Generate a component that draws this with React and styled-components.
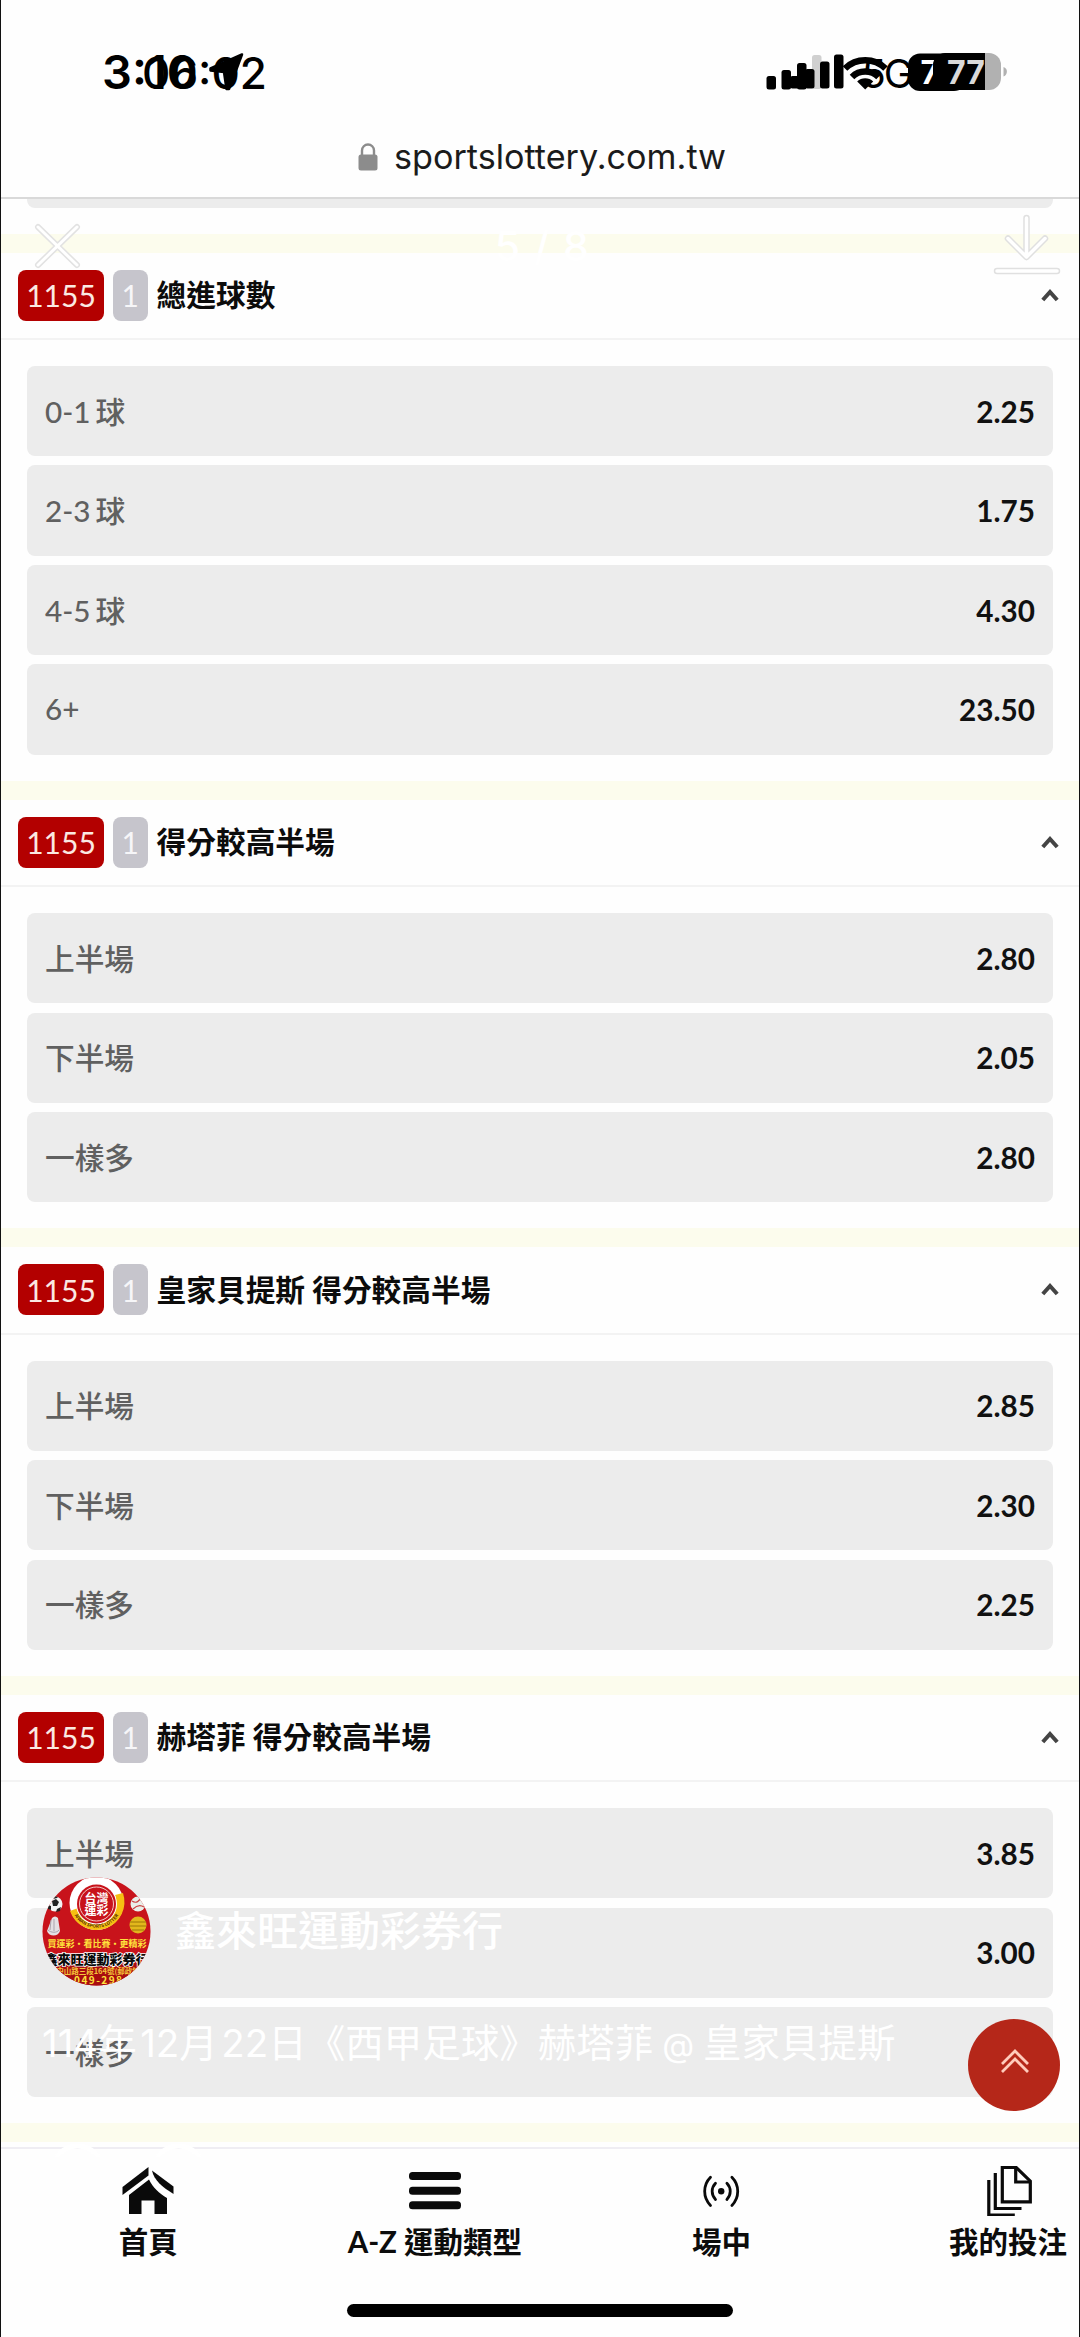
import React from "react";
import styled, { createGlobalStyle } from "styled-components";

const GlobalStyle = createGlobalStyle`
  * {
    box-sizing: border-box;
  }

  body {
    margin: 0;
    background: #fefefe;
    font-family: Lato, "Noto Sans CJK TC", sans-serif;
  }
`;

const Screen = styled.div`
  position: relative;
  display: flex;
  flex-direction: column;
  width: 1080px;
  height: 2337px;
  overflow: hidden;
  background: #fefefe;
  border-left: 1px solid #111;
  border-right: 1px solid #111;
`;

const StatusBar = styled.header`
  position: relative;
  flex: none;
  height: 128px;
`;

const StatusLayer = styled.div`
  position: absolute;
  inset: 0;
  display: flex;
  align-items: flex-start;
  justify-content: space-between;
  padding: ${(p) => p.$padding};
`;

const Clock = styled.span`
  font-family: Inter, sans-serif;
  font-size: ${(p) => p.$size}px;
  font-weight: ${(p) => p.$weight};
  line-height: 56px;
  color: #000;
`;

const ClockGroup = styled.div`
  display: flex;
  align-items: center;
  gap: 10px;
`;

const NetworkIcons = styled.svg`
  margin-top: 6px;
`;

const AddressBar = styled.div`
  flex: none;
  display: flex;
  align-items: center;
  justify-content: center;
  gap: 16px;
  height: 71px;
  padding: 0 0 12px 4px;
  border-bottom: 2px solid #d9d9d9;
  font-family: Inter, sans-serif;
  font-size: 34.2px;
  color: #1b1b1b;
`;

const Content = styled.main`
  flex: none;
  height: 1948px;
  overflow: hidden;
`;

const CutRow = styled.div`
  height: 9px;
  margin: 0 26px 25.5px;
  background: #ececec;
  border-radius: 0 0 8px 8px;
`;

const Divider = styled.div`
  height: 19.3px;
  background: #fcfced;
`;

const MarketHead = styled.div`
  display: flex;
  align-items: center;
  height: 87.5px;
  padding: 0 20px 1px 17px;
  border-bottom: 2px solid #f3f3f3;
`;

const Tag = styled.span`
  display: flex;
  align-items: center;
  justify-content: center;
  width: ${(p) => (p.$muted ? 35 : 86)}px;
  height: 51px;
  margin-right: ${(p) => (p.$muted ? 9 : 8.6)}px;
  border-radius: 8px;
  background: ${(p) => (p.$muted ? "#c6c5cc" : "#b30000")};
  color: ${(p) => (p.$muted ? "#f6f6f8" : "#fbe9e2")};
  font-size: 30px;
`;

const MarketTitle = styled.h2`
  flex: 1;
  margin: 0;
  font-size: 29.7px;
  font-weight: 700;
  line-height: 40px;
  color: #0c0c0c;
`;

const MarketBody = styled.div`
  display: flex;
  flex-direction: column;
  gap: 9.2px;
  padding: 25.7px 26px 25.8px;
`;

const Option = styled.div`
  display: flex;
  align-items: center;
  justify-content: space-between;
  height: 90.3px;
  padding: 0 18px;
  background: #ececec;
  border-radius: 8px;
`;

const OptionName = styled.span`
  padding-bottom: 2px;
  font-size: 29.7px;
  font-weight: 500;
  word-spacing: -2.5px;
  color: #606060;
`;

const Odds = styled.span`
  font-size: 29.7px;
  font-weight: 700;
  color: #111;
`;

const BottomNav = styled.nav`
  position: relative;
  flex: none;
  display: flex;
  height: 190px;
  padding-left: 4px;
  border-top: 2px solid #efedf3;
  background: #fefefe;
`;

const NavItem = styled.a`
  flex: none;
  display: flex;
  flex-direction: column;
  align-items: center;
  width: 286.6px;
  padding-top: 15px;
  font-size: 29.5px;
  font-weight: 700;
  line-height: 40px;
  color: #0c0c0c;

  svg {
    margin-bottom: 6px;
  }
`;

const HomeIndicator = styled.div`
  position: absolute;
  left: 346px;
  bottom: 20px;
  width: 386px;
  height: 13px;
  border-radius: 7px;
  background: #000;
`;

const TopButton = styled.button`
  position: absolute;
  left: 967px;
  top: 2019px;
  display: flex;
  align-items: center;
  justify-content: center;
  width: 92px;
  height: 92px;
  padding: 0 0 8px 2px;
  border: 0;
  border-radius: 50%;
  background: #b52719;
`;

/* story viewer chrome lying over the page */
const ViewerTop = styled.div`
  position: absolute;
  left: 27px;
  right: 14px;
  top: 210px;
  display: flex;
  align-items: flex-start;
  justify-content: space-between;
  pointer-events: none;
`;

const Counter = styled.span`
  padding: 10px 0 0 8px;
  font-family: Inter, sans-serif;
  font-size: 41px;
  font-weight: 500;
  line-height: 52px;
  letter-spacing: 1.5px;
  color: #fff;
`;

const ViewerInfo = styled.div`
  position: absolute;
  left: 41px;
  top: 1877px;
  display: flex;
  flex-direction: column;
  color: #fff;
`;

const Author = styled.div`
  display: flex;
  align-items: center;
  gap: 24px;
  height: 109px;
  font-size: 41px;
  font-weight: 500;

  span {
    line-height: 50px;
    padding-bottom: 2px;
  }
`;

const Caption = styled.p`
  margin: 29px 0 0;
  font-family: Inter, "Noto Sans CJK TC", sans-serif;
  font-size: 38.5px;
  line-height: 56px;
  word-spacing: -2px;
  white-space: pre;
`;

const Figure = styled.span`
  margin-left: 3.5px;
`;

const At = styled.span`
  font-size: 33px;
`;

const ViewerActions = styled.div`
  display: flex;
  gap: 46px;
  margin: 70px 0 0 8px;
`;

const markets = [
  {
    title: "總進球數",
    options: [
      ["0-1 球", "2.25"],
      ["2-3 球", "1.75"],
      ["4-5 球", "4.30"],
      ["6+", "23.50"],
    ],
  },
  {
    title: "得分較高半場",
    options: [
      ["上半場", "2.80"],
      ["下半場", "2.05"],
      ["一樣多", "2.80"],
    ],
  },
  {
    title: "皇家貝提斯 得分較高半場",
    options: [
      ["上半場", "2.85"],
      ["下半場", "2.30"],
      ["一樣多", "2.25"],
    ],
  },
  {
    title: "赫塔菲 得分較高半場",
    options: [
      ["上半場", "3.85"],
      ["下半場", "3.00"],
      ["一樣多", ""],
    ],
  },
];

const Chevron = () => (
  <svg width="18" height="13" viewBox="0 0 18 13" fill="none">
    <path d="M1.8 11 9 3l7.2 8" stroke="#444" strokeWidth="4" />
  </svg>
);

const Lock = () => (
  <svg width="20" height="28" viewBox="0 0 20 28">
    <path
      d="M4 13V7.500a6 6 0 0 1 12 0V13"
      fill="none"
      stroke="#8c8c8c"
      strokeWidth="2.400"
    />
    <rect x="0.500" y="11.500" width="19" height="16" rx="2.500" fill="#8c8c8c" />
  </svg>
);

const LocationArrow = () => (
  <svg width="36" height="38" viewBox="0 0 36 38">
    <path
      d="M34 1.500 2.500 15.500v2L16 19l2.500 17h2.500z"
      fill="#000"
      stroke="#000"
      strokeWidth="2.500"
      strokeLinejoin="round"
    />
  </svg>
);

/* two sets of signal, network and battery drawn one over the other */
const StatusIcons = () => (
  <NetworkIcons width="245" height="44" viewBox="764 50 245 44">
    <g>
      <rect x="766.500" y="76" width="9.500" height="13.500" rx="2.500" />
      <rect x="781.500" y="70" width="9.500" height="19.500" rx="2.500" />
      <rect x="797" y="63" width="9.500" height="26.500" rx="2.500" />
      <rect x="812" y="55" width="9.500" height="34" rx="2.500" fill="#d0d0d0" />
      <g fill="none" stroke="#000" strokeWidth="6.500">
        <path d="M845 68.500a29 29 0 0 1 40.500 0" />
        <path d="M852 77a19 19 0 0 1 26.500 0" />
      </g>
      <path d="M865.200 89.500l-8-8a11.500 11.500 0 0 1 16 0z" />
      <rect x="908" y="53.500" width="58" height="37.500" rx="12" />
      <text
        x="920.500"
        y="83.500"
        fill="#fff"
        fontFamily="Inter, sans-serif"
        fontSize="32"
        fontWeight="700"
      >
        7
      </text>
    </g>
    <g>
      <rect x="790" y="76" width="9.500" height="12.500" rx="2.500" />
      <rect x="805" y="69" width="9.500" height="19.500" rx="2.500" />
      <rect x="820" y="61.500" width="9.500" height="27" rx="2.500" />
      <rect x="834" y="54.500" width="9.500" height="34" rx="2.500" />
      <text
        x="861.500"
        y="87.500"
        fontFamily="Inter, sans-serif"
        fontSize="40"
        fontWeight="400"
        letterSpacing="-2"
      >
        5G
      </text>
      <path d="M945 53h40v37h-40a12 12 0 0 1-12-12V65a12 12 0 0 1 12-12z" />
      <path d="M985 53h4a12 12 0 0 1 12 12v13a12 12 0 0 1-12 12h-4z" fill="#b1b1b1" />
      <path d="M1003.500 67c4.500 1 4.500 8 0 9.500z" fill="#b1b1b1" />
      <text
        x="947"
        y="83.500"
        fill="#d9d9d9"
        fontFamily="Inter, sans-serif"
        fontSize="32"
        fontWeight="700"
      >
        77
      </text>
    </g>
  </NetworkIcons>
);

const CloseIcon = () => (
  <svg width="60" height="66" viewBox="0 0 60 66" fill="none" strokeLinecap="round">
    <path d="M10 17l39 38M49 17 10 55" stroke="#e2e2e2" strokeWidth="6" />
    <path d="M10 17l39 38M49 17 10 55" stroke="#fff" strokeWidth="3" />
  </svg>
);

const DownloadIcon = () => {
  const d = "M37.500 8v38M19 28.500l18.500 18.500L56 28.500M8 61h60";
  return (
    <svg
      width="76"
      height="70"
      viewBox="0 0 76 70"
      fill="none"
      strokeLinecap="round"
      strokeLinejoin="round"
    >
      <path d={d} stroke="#e0e0e0" strokeWidth="6.500" />
      <path d={d} stroke="#fff" strokeWidth="3.500" />
    </svg>
  );
};

const HomeIcon = () => (
  <svg width="52" height="52" viewBox="0 0 52 52" fill="#0a0a0a">
    <path d="M26.500 3v8.500L0.500 31v-8z" />
    <path d="M30 6.500 51.500 22.500v7.500C40 23 32 16 30 6.500z" />
    <path d="M27 15.500c4 8 10 14 18 18.500v16H32.500V36.500h-13V50H7V31z" />
  </svg>
);

const MenuIcon = () => (
  <svg width="52" height="52" viewBox="0 0 52 52" fill="#0a0a0a">
    <rect x="0" y="8" width="52" height="8" rx="3.500" />
    <rect x="0" y="22.700" width="52" height="8" rx="3.500" />
    <rect x="0" y="37.300" width="52" height="8" rx="3.500" />
  </svg>
);

const LiveIcon = () => (
  <svg width="52" height="52" viewBox="0 0 52 52" fill="none" stroke="#0a0a0a" strokeLinecap="round">
    <circle cx="26.200" cy="27.300" r="3.200" fill="#0a0a0a" stroke="none" />
    <g strokeWidth="2.800">
      <path d="M20.500 19.200a11.500 11.500 0 0 0 0 16.200M31.900 19.200a11.500 11.500 0 0 1 0 16.200" />
      <path d="M15.500 13.200a20 20 0 0 0 0 28.200M36.900 13.200a20 20 0 0 1 0 28.200" />
    </g>
  </svg>
);

const BetsIcon = () => (
  <svg width="52" height="52" viewBox="0 0 52 52" fill="none" stroke="#0a0a0a" strokeWidth="3.200">
    <path d="M20.300 3.500h14l14 13.700v20.600h-28z" />
    <path d="M33.700 4v14h14" />
    <path d="M13.300 9v35.500h26.200M6.800 16v35h26" />
  </svg>
);

const DoubleUp = () => (
  <svg width="30" height="25" viewBox="0 0 30 25" fill="none" stroke="#ffcbbb" strokeWidth="2.800">
    <path d="M2 15 15 2l13 13M2 23l13-13 13 13" />
  </svg>
);

const Avatar = () => (
  <svg width="109" height="109" viewBox="0 0 109 109">
    <defs>
      <clipPath id="face">
        <circle cx="54.500" cy="54.500" r="54" />
      </clipPath>
    </defs>
    <g
      clipPath="url(#face)"
      fontFamily="'Noto Sans CJK TC', sans-serif"
      textAnchor="middle"
      fontWeight="700"
    >
      <rect width="109" height="109" fill="#c8131b" />
      <rect y="86" width="109" height="23" fill="#a80d10" />
      <circle cx="54.500" cy="26" r="27" fill="#fff" />
      <path d="M28 34a27 27 0 0 0 53-18l-8 2a19 19 0 0 1-37 13z" fill="#f6bf12" />
      <circle cx="54.500" cy="27" r="20.500" fill="#fff" />
      <circle cx="54.500" cy="27" r="19.500" fill="#c8131b" />
      <circle cx="54.500" cy="27" r="17" fill="none" stroke="#f3c9c6" />
      <text x="54.500" y="26" fontSize="12" fill="#fff">台灣</text>
      <text x="54.500" y="38" fontSize="12" fill="#fff">運彩</text>
      <path id="ring" d="M33 39a25.500 25.500 0 0 0 43 0" fill="none" />
      <text fontSize="4.600" fill="#5a3208">
        <textPath href="#ring" startOffset="50%">TAIWAN SPORTS LOTTERY</textPath>
      </text>
      <circle cx="13" cy="27" r="7.500" fill="#f4f4f4" />
      <path d="M10 24l4-2 3 3-2 4-4 0zM6 28l3 1 0 4-3-1zM15 32l4-2-1 4-4 1zM12 19l4 1-1 1-4 1z" fill="#222" />
      <circle cx="96" cy="27" r="7.500" fill="#e9efea" />
      <path d="M90 24c4 3 8 0 9-4M91 32c4-4 8-4 11-2" fill="none" stroke="#c44" strokeWidth="1.200" />
      <path d="M10 41c2-2 4-2 6 0l2 13c-2 6-11 6-13 0z" fill="#e4e0e4" />
      <path d="M6 53c3 3 9 3 11 0M12 42v12M9 43l-1 10" fill="none" stroke="#a9a3ad" />
      <circle cx="96" cy="48" r="8.500" fill="#e2b71c" />
      <path d="M88 45h16M88 49h16M90 53h12" stroke="#9c7607" />
      <text x="55" y="69.500" fontSize="9" fill="#ffe23c">買運彩・看比賽・更精彩</text>
      <text
        x="54.500"
        y="87"
        fontSize="13"
        fontWeight="900"
        fill="#0a0a0a"
        stroke="#fff"
        strokeWidth="1.600"
        paintOrder="stroke"
      >
        鑫來旺運動彩券行
      </text>
      <text x="56" y="97" fontSize="7.500" fill="#f5c63a">鎮中山路三段164號(郵政總局</text>
      <text x="56" y="106.500" fontSize="10" fill="#ffe23c" textLength="48">049-298</text>
    </g>
  </svg>
);

const ActionRing = () => (
  <svg width="55" height="14" viewBox="0 0 55 14">
    <circle cx="27.500" cy="28" r="25" fill="none" stroke="#fff" strokeWidth="5" />
  </svg>
);

const Market = ({ title, options }) => (
  <section>
    <Divider />
    <MarketHead>
      <Tag>1155</Tag>
      <Tag $muted>1</Tag>
      <MarketTitle>{title}</MarketTitle>
      <Chevron />
    </MarketHead>
    <MarketBody>
      {options.map(([name, odds]) => (
        <Option key={name}>
          <OptionName>{name}</OptionName>
          <Odds>{odds}</Odds>
        </Option>
      ))}
    </MarketBody>
  </section>
);

const App = () => (
  <>
    <GlobalStyle />
    <Screen>
      <StatusBar>
        <StatusLayer $padding="45px 0 0 141px">
          <Clock $size={44} $weight={500}>
            06:02
          </Clock>
        </StatusLayer>
        <StatusLayer $padding="44px 70px 0 101px">
          <ClockGroup>
            <Clock $size={47} $weight={600}>
              3:10
            </Clock>
            <LocationArrow />
          </ClockGroup>
          <StatusIcons />
        </StatusLayer>
      </StatusBar>
      <AddressBar>
        <Lock />
        <span>sportslottery.com.tw</span>
      </AddressBar>
      <Content>
        <CutRow />
        {markets.map((m) => (
          <Market key={m.title} {...m} />
        ))}
        <Divider />
      </Content>
      <BottomNav>
        <NavItem>
          <HomeIcon />
          首頁
        </NavItem>
        <NavItem>
          <MenuIcon />
          A-Z 運動類型
        </NavItem>
        <NavItem>
          <LiveIcon />
          場中
        </NavItem>
        <NavItem>
          <BetsIcon />
          我的投注
        </NavItem>
        <HomeIndicator />
      </BottomNav>
      <TopButton>
        <DoubleUp />
      </TopButton>
      <ViewerTop>
        <CloseIcon />
        <Counter>5 / 8</Counter>
        <DownloadIcon />
      </ViewerTop>
      <ViewerInfo>
        <Author>
          <Avatar />
          <span>鑫來旺運動彩券行</span>
        </Author>
        <Caption>
          114年<Figure>12</Figure>月<Figure>22</Figure>日《西甲足球》赫塔菲 <At>@</At> 皇家貝提斯
        </Caption>
        <ViewerActions>
          <ActionRing />
          <ActionRing />
        </ViewerActions>
      </ViewerInfo>
    </Screen>
  </>
);

export default App;
